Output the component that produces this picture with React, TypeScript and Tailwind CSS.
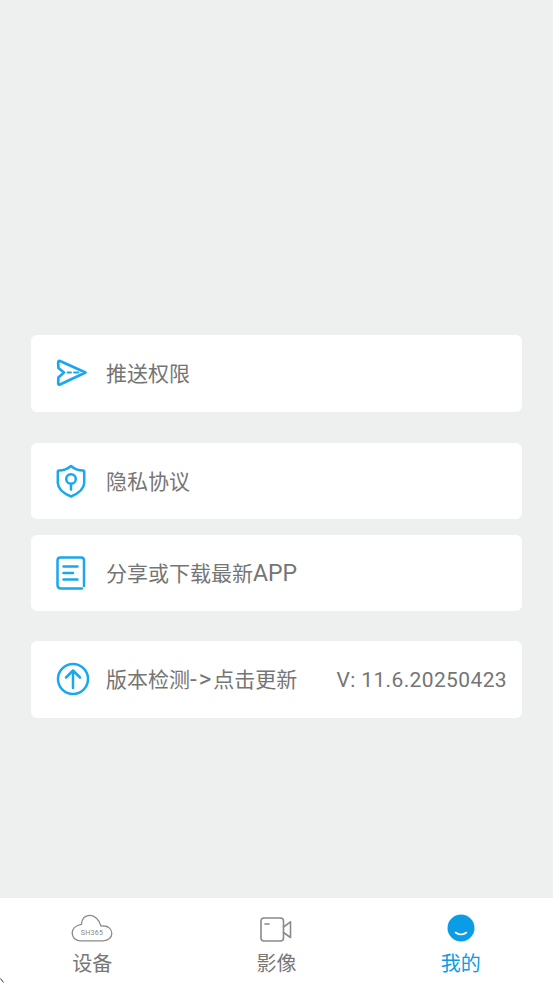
import React from 'react';

const SendIcon = () => (
  <svg width="32" height="30" viewBox="0 0 32 30" fill="none" stroke="#1aa7ee" strokeWidth="2.7" strokeLinecap="round" strokeLinejoin="round">
    <path d="M4 3 L29.5 14.5 L4 26.5 Q2.2 27 2.2 25 L2.4 19.5 L8 14.5 L2.4 10 L2.2 5 Q2.2 2.4 4 3 Z" />
    <path d="M11.5 14.5 H15 M18 14.5 H22.5" strokeWidth="1.8" />
  </svg>
);

const ShieldIcon = () => (
  <svg width="30" height="34" viewBox="0 0 30 34" fill="none" stroke="#1aa7ee" strokeWidth="2.5" strokeLinecap="round" strokeLinejoin="round">
    <path d="M15 2 Q20 6.5 27 6.5 Q28.2 6.5 28.2 8 V19 Q28 27 15 32.5 Q2 27 1.8 19 V8 Q1.8 6.5 3 6.5 Q10 6.5 15 2 Z" />
    <circle cx="15" cy="15" r="4.8" />
    <path d="M15 20 V25.5" />
  </svg>
);

const DocIcon = () => (
  <svg width="30" height="34" viewBox="0 0 30 34" fill="none" stroke="#1aa7ee" strokeWidth="2.5" strokeLinecap="round" strokeLinejoin="round">
    <path d="M26 32.5 H5 Q1.5 32.5 1.5 29 V4.5 Q1.5 1.5 4.5 1.5 H25 Q28 1.5 28 4.5 V30" />
    <path d="M7.5 10.5 H21.5 M7.5 17 H17 M7.5 23.5 H21.5" />
  </svg>
);

const UpdateIcon = () => (
  <svg width="34" height="34" viewBox="0 0 34 34" fill="none" stroke="#1aa7ee" strokeWidth="2.5" strokeLinecap="round" strokeLinejoin="round">
    <circle cx="17" cy="17" r="15" />
    <path d="M17 26 V9 M10 15.5 L17 8.5 L24 15.5" />
  </svg>
);

const CloudIcon = () => (
  <svg width="42" height="28" viewBox="0 0 42 28" fill="none" stroke="#8a8a8a" strokeWidth="1.3" strokeLinejoin="round">
    <path d="M9 26.8 H32 C37.5 26.8 40.8 23.4 40.8 19.4 C40.8 15.4 37.8 12.4 33.4 12 C32 11.8 31 11.8 30 12.2 C28.4 5.6 23.4 1.2 18.6 1.4 C14 1.6 10.8 5 10.4 10.4 C4.8 11.4 1.2 14.8 1.2 19 C1.2 23.4 4.4 26.8 9 26.8 Z" />
    <text x="21" y="21" textAnchor="middle" fontSize="7" letterSpacing="0.3" fill="#888" stroke="none" fontFamily="'Roboto', sans-serif">SH365</text>
  </svg>
);

const VideoIcon = () => (
  <svg width="32" height="25" viewBox="0 0 32 25" fill="none" stroke="#8a8a8a" strokeWidth="1.6" strokeLinecap="round" strokeLinejoin="round">
    <rect x="1" y="1" width="22.5" height="23" rx="3" />
    <path d="M23.5 10 L30.5 4.8 V20.5 L23.5 15.5" />
    <path d="M5 7 H9" />
  </svg>
);

const MeIcon = () => (
  <svg width="28" height="28" viewBox="0 0 28 28">
    <circle cx="14" cy="14" r="13.5" fill="#0a9de6" />
    <path d="M8.5 18.5 Q14 22.5 19.5 18.5" fill="none" stroke="#ffffff" strokeWidth="1.6" strokeLinecap="round" />
  </svg>
);

const Row = ({ icon, children, right, className = '' }: { icon: React.ReactNode; children: React.ReactNode; right?: string; className?: string }) => (
  <div className={`h-[76.5px] bg-white rounded-md flex items-center pr-[15px] ${className}`}>
    <div className="w-[76px] pl-[25px] flex items-center shrink-0">{icon}</div>
    <span className="-ml-px leading-[30px] pt-[2px]">{children}</span>
    {right && <span className="ml-auto pt-[2px] tracking-[0.37px]">{right}</span>}
  </div>
);

const Tab = ({ icon, label, active }: { icon: React.ReactNode; label: string; active?: boolean }) => (
  <div className={`flex-1 flex flex-col items-center ${active ? 'text-[#0a9de6]' : 'text-[#777777]'}`}>
    <div className="h-[31px] flex items-end justify-center">{icon}</div>
    <span className="text-[20px] leading-[28px] mt-2">{label}</span>
  </div>
);

const App = () => {
  return (
    <div className="relative w-[553px] h-[983px] flex flex-col bg-[#eef0ef] overflow-hidden text-[21px] text-[#757575] font-['Roboto','Noto_Sans_CJK_SC',sans-serif]">
      <div className="flex-1 pt-[335px] px-[31px]">
        <Row icon={<SendIcon />}>推送权限</Row>
        <Row icon={<ShieldIcon />} className="mt-[31px]">隐私协议</Row>
        <Row icon={<DocIcon />} className="mt-[15.5px]">分享或下载最新<span className="text-[23px] leading-none">APP</span></Row>
        <Row icon={<UpdateIcon />} right="V: 11.6.20250423" className="mt-[30px]">版本检测<span className="text-[24px] leading-none tracking-[2px]">-&gt;</span>点击更新</Row>
      </div>

      {/* bottom tabs */}
      <div className="h-[85px] bg-white flex pt-[13px]">
        <Tab icon={<CloudIcon />} label="设备" />
        <Tab icon={<VideoIcon />} label="影像" />
        <Tab icon={<MeIcon />} label="我的" active />
      </div>

      {/* stray corner mark */}
      <svg className="absolute left-0 bottom-0" width="4" height="5" viewBox="0 0 4 5">
        <path d="M0.5 0.5 L3.5 4.5" stroke="#333333" strokeWidth="1" fill="none" />
      </svg>
    </div>
  );
};

export default App;
